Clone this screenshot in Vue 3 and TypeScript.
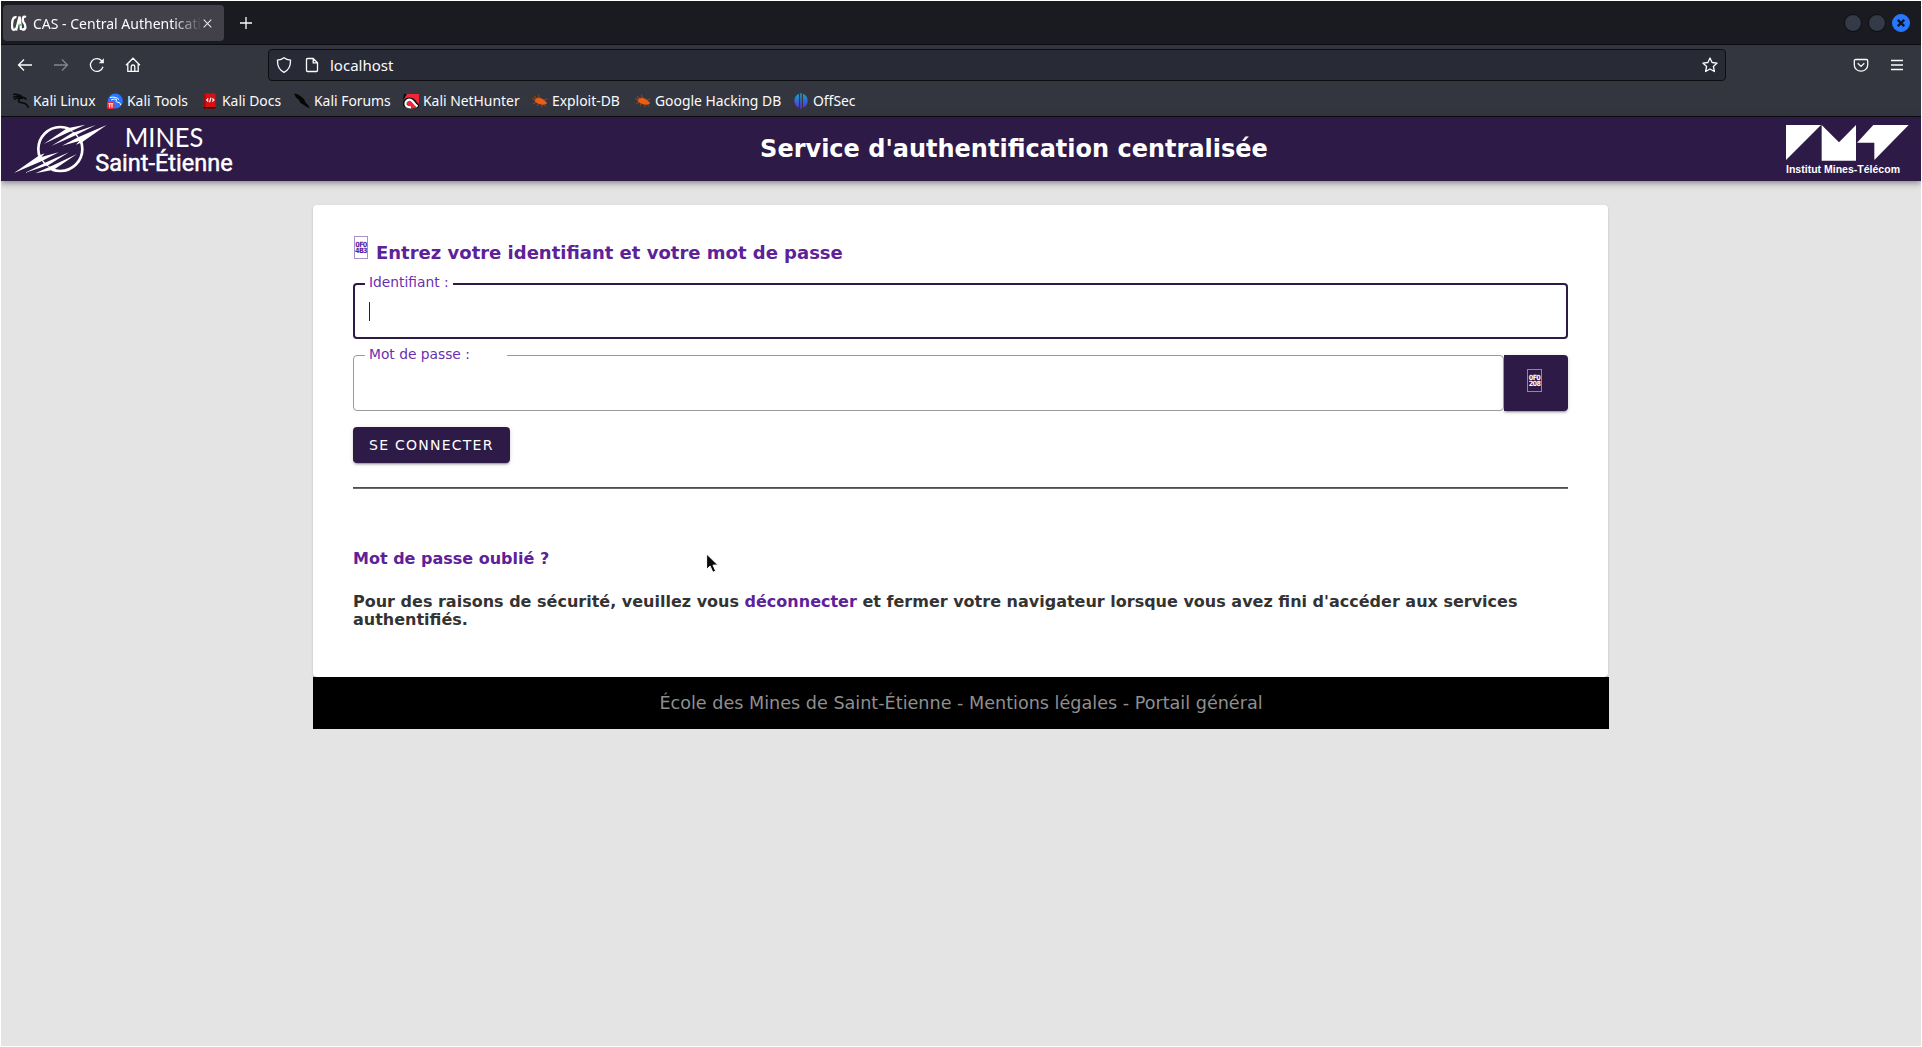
<script setup lang="ts">
interface Bookmark { id: string; label: string; width: number }

const bookmarks: Bookmark[] = [
  { id: 'kali', label: 'Kali Linux', width: 94 },
  { id: 'tools', label: 'Kali Tools', width: 95 },
  { id: 'docs', label: 'Kali Docs', width: 92 },
  { id: 'forums', label: 'Kali Forums', width: 109 },
  { id: 'nethunter', label: 'Kali NetHunter', width: 129 },
  { id: 'exploit', label: 'Exploit-DB', width: 103 },
  { id: 'ghdb', label: 'Google Hacking DB', width: 158 },
  { id: 'offsec', label: 'OffSec', width: 80 },
]

// The emblem is point-symmetric around the centre of its ring.
const halves: string[] = ['rotate(0 181 117)', 'rotate(180 181 117)']
</script>

<template>
  <div class="window">
    <div class="tabs">
      <div class="tab">
        <svg class="favicon" width="16" height="17" viewBox="0 0 16 17" fill="none" stroke="#fff" stroke-width="2.4">
          <path d="M5.5 2.4C2 1 .8 7 1 11c.2 5 2.600 4.500 4 2" />
          <path d="M5 15.500 8.600 1.500 10 15" />
          <path d="M15 2c-3-1.500-4 2-2.600 5 3 3.500 2.800 8-1.400 7.500" />
          <path d="M7 11.500l3-2" stroke="#3fae49" stroke-width="1.500" />
        </svg>
        <span class="tab-title">CAS - Central Authentication</span>
        <svg class="tab-close" width="9" height="9" viewBox="0 0 9 9" stroke="#e4e4e6" stroke-width="1.1"><path d="M.7.7l7.600 7.600M8.300.7L.7 8.300" /></svg>
      </div>
      <svg class="new-tab" width="12" height="12" viewBox="0 0 12 12" stroke="#fbfbfe" stroke-width="1.3"><path d="M6 0v12M0 6h12" /></svg>
      <div class="controls">
        <i class="ctl"></i><i class="ctl"></i>
        <i class="ctl close"><svg width="8" height="8" viewBox="0 0 8 8" stroke="#11151f" stroke-width="2.300"><path d="M.8.8l6.400 6.400M7.200.8L.8 7.200" /></svg></i>
      </div>
    </div>

    <div class="toolbar">
      <div class="nav">
        <svg class="nav-icon" viewBox="0 0 16 16"><path d="M15 8H1.500M7 2.500L1.500 8 7 13.500" /></svg>
        <svg class="nav-icon dim" viewBox="0 0 16 16"><path d="M1 8h13.500M9 2.500L14.500 8 9 13.500" /></svg>
        <svg class="nav-icon" viewBox="0 0 16 16"><path d="M14 9.800A6.400 6.400 0 1 1 12.600 3.700L14 5.200" /><path d="M14.800 1.200v5H9.800z" fill="#fbfbfe" stroke="none" /></svg>
        <svg class="nav-icon" viewBox="0 0 16 16"><path d="M1 8.200L8 1.200l7 7M2.800 7v7.300h10.400V7M6.200 14V9.800a1.800 1.800 0 0 1 3.600 0V14" /></svg>
      </div>
      <div class="urlbar">
        <svg class="shield" width="16" height="16" viewBox="0 0 16 16"><path d="M8 .8C6.300 2.200 3.800 3 1.500 3.200 1.300 8.500 3 13 8 15.300c5-2.300 6.700-6.800 6.500-12.100C12.200 3 9.700 2.200 8 .8z" /></svg>
        <svg class="doc" width="14" height="16" viewBox="0 0 14 16"><path d="M2.500 1.500h5.700l4.300 4.300v7.700a1 1 0 0 1-1 1h-9a1 1 0 0 1-1-1v-11a1 1 0 0 1 1-1zM8.200 1.500v4.300h4.300" /></svg>
        <span class="url">localhost</span>
        <svg class="star" width="16" height="16" viewBox="0 0 16 16"><path d="M8 1l2.100 4.500 5 .6-3.700 3.400 1 5L8 12l-4.400 2.500 1-5L.9 6.100l5-.6z" stroke-linejoin="round" /></svg>
      </div>
      <svg class="pocket" width="16" height="16" viewBox="0 0 16 16"><path d="M2.500 2.500h11c.7 0 1.200.5 1.200 1.200V8A6.700 6.200 0 0 1 1.300 8V3.700c0-.7.500-1.200 1.200-1.200zM4.700 6.300L8 9.400l3.300-3.100" /></svg>
      <svg class="menu" width="12" height="12" viewBox="0 0 12 12"><path d="M0 1.500h12M0 6h12M0 10.500h12" /></svg>
    </div>

    <div class="bookmarks">
      <div v-for="b in bookmarks" :key="b.id" class="bookmark" :style="{ width: b.width + 'px' }">
        <svg class="bm-icon" viewBox="0 0 16 16">
          <g v-if="b.id === 'kali'" fill="none" stroke="#08090b" stroke-width="1.500">
            <path d="M0 1.500c4-.5 7 .3 9 2.500M0 4.500C3 3 6 3 9 4M1 6.500c3-2 6-2 9-1M9 4c2 .2 3 .8 4.500 2.500M8 5C4 7 5 9.500 9 9.700c4 .2 5.500 2 6.500 5.300" />
          </g>
          <g v-else-if="b.id === 'tools'">
            <circle cx="8.300" cy="8" r="7.600" fill="#2777ff" />
            <path d="M3 4.500c4-1 7 0 9 2M4 7c3-1.500 5-1 6 0-2 1-1 2 1 2.300s2.300 1 2.700 2.700" fill="none" stroke="#fff" stroke-width="1" />
            <rect x="0" y="8.500" width="7.500" height="7.500" rx="2" fill="#f12c3a" />
            <path d="M2.700 10.500v4M5 10.500v4M1.500 10.700h4.700" stroke="#fff" stroke-width="1" />
          </g>
          <g v-else-if="b.id === 'docs'">
            <rect x="1.500" y=".5" width="12" height="15" fill="#d41212" />
            <path d="M1.500.5h2v15h-2z" fill="#9c0808" /><path d="M1.500 14h12v1.500h-12z" fill="#260505" />
            <path d="M6.300 5.500L4.600 7l1.700 1.500M10.300 5.500L12 7l-1.700 1.500M9 4.800L7.500 9.200" fill="none" stroke="#fff" stroke-width="1.100" />
          </g>
          <path v-else-if="b.id === 'forums'" d="M0 .5l3.500.7L7 3.500l3 2.500 1.500 3.500L14 12l2 3.500-3.500-1.700-3-2L6.500 10 5 7 2 4.500z" fill="#050507" />
          <g v-else-if="b.id === 'nethunter'">
            <path d="M3 1h13v9L9 16 1 8z" fill="#ef2637" /><path d="M0 7L4 1 1 1z" fill="#0a0a0c" />
            <path d="M2.500 13.500C.5 10 2 6 6.500 6c4.500 0 5 3 9 8" fill="none" stroke="#0c0c0e" stroke-width="3.200" />
            <path d="M8 14.300C4 14.500 2 12.500 2.500 10s3-4 5.500-3 2.500 4 6.500 6.500" fill="none" stroke="#fff" stroke-width="2.200" />
            <path d="M5 10l4.500 5h4l-5-5.500z" fill="#ef2637" />
          </g>
          <g v-else-if="b.id === 'exploit' || b.id === 'ghdb'">
            <path d="M2.500 7c1-2.500 5-3 8-1s4 3 4.500 4.500c-2 1.500-5 1.700-8 .5S3 9 2.500 7z" fill="#ee5c10" />
            <path d="M0 5.500l4 1M2 3l3.500 3M6.500 1.500l1 4M15.500 6l-3.500 1M1 10.500l3.500-1.200M5 13l1.500-3M10 14l-.5-3M14 13.500l-2-2.500" stroke="#9d491f" stroke-width=".9" fill="none" />
          </g>
          <g v-else>
            <linearGradient id="off" gradientUnits="userSpaceOnUse" x1="0" y1="0" x2="0" y2="16"><stop offset="0" stop-color="#15a9c4" /><stop offset=".55" stop-color="#3862cf" /><stop offset="1" stop-color="#6428dc" /></linearGradient>
            <path d="M6 .8v14A7.600 7.600 0 0 1 6 .8zM10 .8v14A7.600 7.600 0 0 0 10 .8zM7.200.3h1.600v15.400H7.200z" fill="url(#off)" />
          </g>
        </svg>
        <span>{{ b.label }}</span>
      </div>
    </div>

    <header class="app-header">
      <svg class="logo-mines" width="240" height="64" viewBox="3 21 720 192">
        <circle cx="181" cy="117" r="66" fill="none" stroke="#fff" stroke-width="8" />
        <g v-for="half in halves" :key="half" :transform="half">
          <path d="M204 56l22-20h80v50l-62 8-14-22z" fill="#2e1a47" />
          <path d="M131 102l70-47 55-11-60 27z" fill="#fff" />
          <path d="M155 107l60-37 73-25-66 33z" fill="#fff" />
          <path d="M186 107l50-26 84-36-74 52-18 7 10-11z" fill="#fff" />
        </g>
        <text x="374" y="110" textLength="236" lengthAdjust="spacingAndGlyphs" class="mines">MINES</text>
        <text x="286" y="184" textLength="412" lengthAdjust="spacingAndGlyphs" class="saint">Saint-Étienne</text>
      </svg>
      <h1>Service d'authentification centralisée</h1>
      <svg class="logo-imt" width="134" height="64" viewBox="381 351 402 192">
        <path d="M378 375h105L378 480zM485 375l52 52 51-52v107H485zM640 375h106L643 480v-52h-52z" fill="#fff" />
        <text x="378" y="518" textLength="342" lengthAdjust="spacingAndGlyphs" class="imt">Institut Mines-Télécom</text>
      </svg>
    </header>

    <main class="page">
      <section class="card">
        <h2><span class="tofu"><b>0F0</b><b>4B3</b></span>Entrez votre identifiant et votre mot de passe</h2>
        <div class="field focused"><label class="notch">Identifiant :</label><i class="caret"></i></div>
        <div class="password">
          <div class="field"><label class="notch wide">Mot de passe :</label></div>
          <button class="reveal" type="button"><span class="tofu"><b>0F0</b><b>208</b></span></button>
        </div>
        <button class="submit" type="button">SE CONNECTER</button>
        <div class="rule"></div>
        <p class="forgot"><a>Mot de passe oublié ?</a></p>
        <p class="notice">Pour des raisons de sécurité, veuillez vous <a>déconnecter</a> et fermer votre navigateur lorsque vous avez fini d'accéder aux services authentifiés.</p>
      </section>
      <footer class="footer">École des Mines de Saint-Étienne - Mentions légales - Portail général</footer>
    </main>

    <svg class="cursor" width="13" height="21" viewBox="0 0 13 21"><path d="M.6 1v15.300l3.500-3.200 2.700 6.200 2.900-1.200-2.700-6h4.900z" fill="#0a0a0a" stroke="#fff" stroke-width="1" /></svg>
  </div>
</template>

<style>
html, body { margin: 0; background: #fff; overflow: hidden; }
</style>

<style scoped>
* { box-sizing: border-box; }
.window { position: relative; width: 1920px; height: 1045px; margin: 1px; background: #e4e4e4; overflow: hidden; display: flex; flex-direction: column; font-family: "DejaVu Sans", sans-serif; }
.window svg { flex: none; display: block; }

.tabs { height: 44px; flex: none; display: flex; align-items: center; background: #1a1b20; border-bottom: 1px solid #0c0d10; font: 14px "Noto Sans", sans-serif; }
.tab { width: 221px; height: 36px; margin: 1px 0 0 2px; padding-left: 8px; border-radius: 4px; background: #42414a; color: #fbfbfe; display: flex; align-items: center; }
.tab-title { width: 169px; margin-left: 6px; overflow: hidden; white-space: nowrap; font-size: 14px; -webkit-mask-image: linear-gradient(to left, transparent 0, #000 30px); mask-image: linear-gradient(to left, transparent 0, #000 30px); }
.tab-close { margin-left: 1px; }
.new-tab { margin-left: 16px; }
.controls { margin: 1px 11px 0 auto; display: flex; gap: 6px; }
.ctl { width: 18px; height: 18px; border-radius: 50%; background: #343a46; border: 1px solid #0d0e12; display: flex; align-items: center; justify-content: center; }
.ctl.close { background: #2777ff; border-color: #2777ff; }

.toolbar { height: 41px; flex: none; display: flex; align-items: center; padding-bottom: 1px; background: #33363f; }
.toolbar svg { fill: none; stroke: #fbfbfe; stroke-width: 1.3; }
.nav { display: flex; gap: 20px; padding-left: 16px; width: 267px; flex: none; }
.nav-icon { width: 16px; height: 16px; }
.nav-icon.dim { opacity: .4; }
.urlbar { width: 1458px; height: 32px; flex: none; display: flex; align-items: center; background: #282a36; border: 1px solid #0d0e12; border-radius: 4px; color: #fbfbfe; font: 15px/20px "Noto Sans", sans-serif; }
.shield { margin-left: 7px; }
.doc { margin-left: 13px; }
.url { margin-left: 11px; }
.star { margin: 0 7px 0 auto; }
.pocket { margin-left: 127px; }
.menu { margin-left: 22px; }

.bookmarks { height: 31px; flex: none; display: flex; align-items: center; padding: 0 0 0 12px; background: #33363f; border-bottom: 1px solid #0c0d10; color: #fbfbfe; font: 13.9px/20px "Noto Sans", sans-serif; }
.bookmark { display: flex; align-items: center; gap: 4px; white-space: nowrap; }
.bm-icon { width: 16px; height: 16px; }

.app-header { position: relative; height: 64px; flex: none; display: flex; align-items: center; background: #2e1a47; color: #fff; box-shadow: 0 2px 4px -1px rgba(0,0,0,.2), 0 4px 5px rgba(0,0,0,.14), 0 1px 10px rgba(0,0,0,.12); }
.app-header h1 { flex: 1; margin: 0; text-align: center; font-size: 24px; line-height: 32px; }
.logo-imt { overflow: visible; }
.mines { font: 400 83px Lato, sans-serif; fill: #fff; }
.saint { font: 400 74px Roboto, sans-serif; fill: #fff; stroke: #fff; stroke-width: 1.5px; }
.imt { font: bold 30px "Liberation Sans", sans-serif; fill: #fff; }

.page { width: 1296px; margin: 24px 0 0 312px; }
.card { width: 1295px; height: 472px; padding: 24px 40px 0; background: #fff; border-radius: 4px; box-shadow: 0 2px 1px -1px rgba(0,0,0,.2), 0 1px 1px rgba(0,0,0,.14), 0 1px 3px rgba(0,0,0,.12); }
h2 { height: 48px; margin: 0 0 6px; display: flex; align-items: center; font-size: 18px; line-height: 22px; color: #5d2199; white-space: nowrap; }
.tofu { width: 14px; height: 23px; border: 1px solid #a88fce; display: flex; flex-direction: column; align-items: center; justify-content: center; font: 7.2px "DejaVu Sans Condensed", "DejaVu Sans", sans-serif; }
.tofu b { font-weight: bold; line-height: 6px; letter-spacing: -.7px; }
h2 .tofu { margin: -11px 8px 0 1px; }
a { color: #5d2199; }
.field { position: relative; height: 56px; flex: 1; border: 1px solid #9a9a9a; border-radius: 4px; }
.field.focused { border: 2px solid #2e1a47; }
.notch { position: absolute; left: 11px; top: -10px; padding: 0 5px 0 4px; background: #fff; color: #6b2fae; font-size: 13.8px; line-height: 16px; white-space: nowrap; }
.focused .notch { left: 10px; top: -11px; width: 88px; }
.notch.wide { width: 142px; }
.caret { position: absolute; left: 14px; top: 17px; width: 1px; height: 19px; background: #2e1a47; }
.password { display: flex; margin: 16px 0; }
.reveal { width: 64px; height: 56px; padding: 0 0 5px; display: flex; align-items: center; justify-content: center; border: 0; border-radius: 0 4px 4px 0; background: #2e1a47; color: #fff; }
.reveal .tofu { width: 15px; border-color: #9386a3; margin-left: -3px; }
.reveal, .submit { box-shadow: 0 3px 1px -2px rgba(0,0,0,.2), 0 2px 2px rgba(0,0,0,.14), 0 1px 5px rgba(0,0,0,.12); }
.submit { display: block; height: 36px; padding: 0 16px; border: 0; border-radius: 4px; background: #2e1a47; color: #fff; font: 14px "DejaVu Sans", sans-serif; letter-spacing: 1.25px; }
.rule { height: 2px; margin-top: 24px; background: #6a6a6a; border-top: 1px solid #4f4f4f; }
p { margin: 0; font-size: 16px; font-weight: bold; line-height: 18px; color: #333; }
.forgot { margin-top: 61px; }
.notice { margin-top: 25px; }
.footer { position: relative; height: 52px; background: #000; color: #8f8f8f; font-size: 17.6px; line-height: 52px; text-align: center; }
.cursor { position: absolute; left: 705px; top: 552px; }
</style>
